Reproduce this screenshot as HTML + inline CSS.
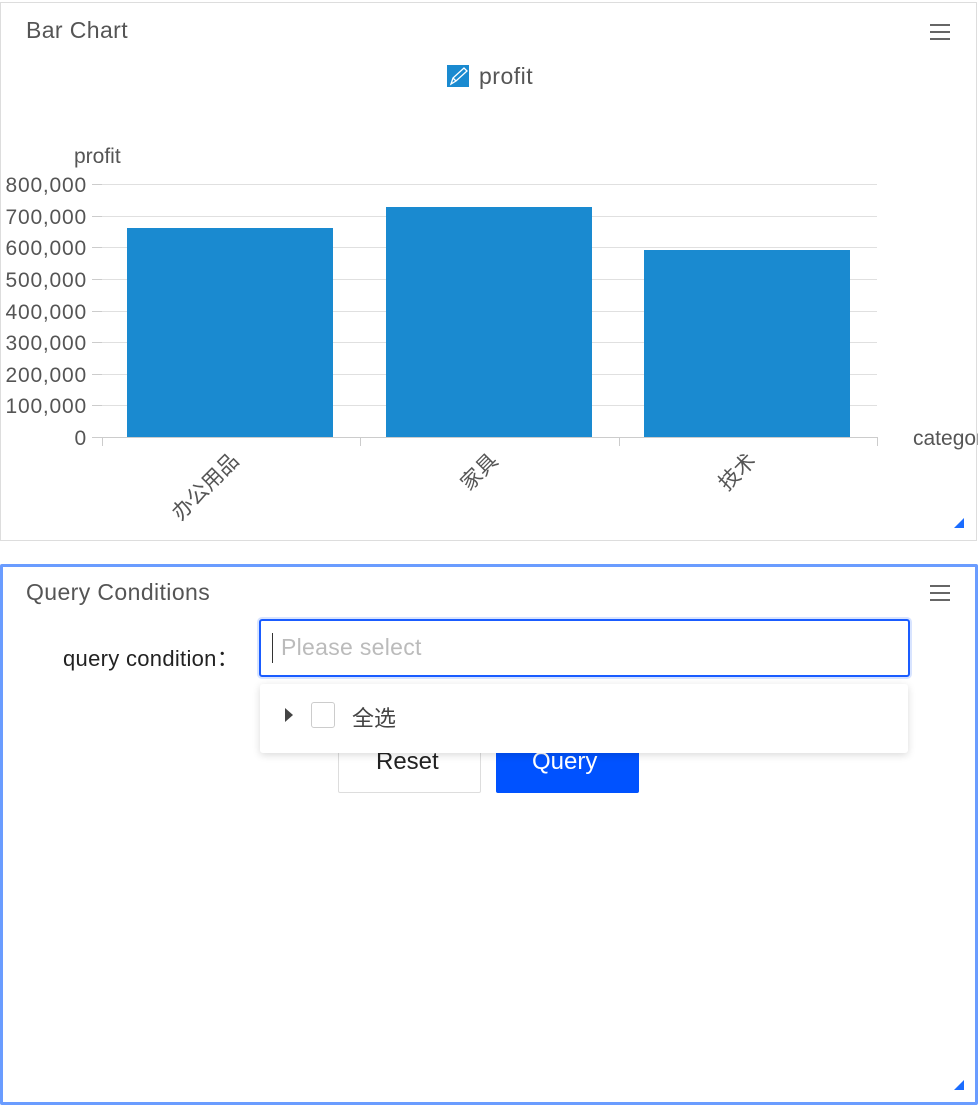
<!DOCTYPE html>
<html><head><meta charset="utf-8"><style>
body{margin:0;width:978px;height:1104px;background:#fff;font-family:"Liberation Sans","Noto Sans CJK SC",sans-serif;position:relative;overflow:hidden}
.p1{position:absolute;left:0;top:2px;width:975px;height:537px;border:1px solid #ddd}
.p2{position:absolute;left:0;top:564px;width:972px;height:535px;border:3px solid #6a9cff;border-radius:2px}
.t{position:absolute;font-size:23px;color:#555;letter-spacing:0.4px}
.menu{position:absolute;width:20px;height:16px;border-top:2px solid #666;border-bottom:2px solid #666;box-sizing:border-box}
.menu:after{content:"";position:absolute;left:0;right:0;top:5px;border-top:2px solid #666}
.corner{position:absolute;width:0;height:0;border-left:10px solid transparent;border-bottom:10px solid #1a6cff}
</style></head><body>
<div class="p1"></div>
<div class="t" style="left:26px;top:17px">Bar Chart</div>
<div class="menu" style="left:930px;top:24px"></div>
<div class="corner" style="left:954px;top:518px"></div>
<svg style="position:absolute;left:0;top:0" width="978" height="540" font-family="Liberation Sans, Noto Sans CJK SC, sans-serif">
<rect x="447" y="65" width="22" height="22" fill="#1a8ad0"/>
<path d="M451 84 L453 78 L464 68 L467 71 L456 81 Z M453 78 L456 81" stroke="#fff" stroke-width="1.3" fill="none"/>
<text x="479" y="84" font-size="23" fill="#555" letter-spacing="0.5">profit</text>
<text x="74" y="163" font-size="21" fill="#555">profit</text>
<g stroke="#e0e0e0" stroke-width="1">
<line x1="102" x2="877" y1="184.5" y2="184.5"/><line x1="102" x2="877" y1="216.5" y2="216.5"/><line x1="102" x2="877" y1="247.5" y2="247.5"/><line x1="102" x2="877" y1="279.5" y2="279.5"/><line x1="102" x2="877" y1="311.5" y2="311.5"/><line x1="102" x2="877" y1="342.5" y2="342.5"/><line x1="102" x2="877" y1="374.5" y2="374.5"/><line x1="102" x2="877" y1="405.5" y2="405.5"/>
</g>
<g stroke="#ccc"><line x1="102" x2="877" y1="437.5" y2="437.5"/>
<line x1="92" x2="102" y1="184.5" y2="184.5"/><line x1="92" x2="102" y1="216.5" y2="216.5"/><line x1="92" x2="102" y1="247.5" y2="247.5"/><line x1="92" x2="102" y1="279.5" y2="279.5"/><line x1="92" x2="102" y1="311.5" y2="311.5"/><line x1="92" x2="102" y1="342.5" y2="342.5"/><line x1="92" x2="102" y1="374.5" y2="374.5"/><line x1="92" x2="102" y1="405.5" y2="405.5"/><line x1="92" x2="102" y1="437.5" y2="437.5"/>
<line x1="102.5" x2="102.5" y1="437" y2="446"/><line x1="360.5" x2="360.5" y1="437" y2="446"/><line x1="619.5" x2="619.5" y1="437" y2="446"/><line x1="877.5" x2="877.5" y1="437" y2="446"/></g>
<g font-size="21" fill="#555" text-anchor="end" letter-spacing="0.8">
<text x="87" y="192">800,000</text><text x="87" y="224">700,000</text><text x="87" y="255">600,000</text><text x="87" y="287">500,000</text><text x="87" y="319">400,000</text><text x="87" y="350">300,000</text><text x="87" y="382">200,000</text><text x="87" y="413">100,000</text><text x="87" y="445">0</text>
</g>
<g fill="#1a8ad0"><rect x="127" y="228" width="206" height="209"/><rect x="386" y="207" width="206" height="230"/><rect x="644" y="250" width="206" height="187"/></g>
<text x="913" y="445" font-size="21" fill="#555">category</text>
<g font-size="21" fill="#555" text-anchor="end">
<text transform="translate(240,462) rotate(-45)">办公用品</text>
<text transform="translate(499,462) rotate(-45)">家具</text>
<text transform="translate(757,462) rotate(-45)">技术</text>
</g>
</svg>
<div class="p2"></div>
<div class="t" style="left:26px;top:579px">Query Conditions</div>
<div class="menu" style="left:930px;top:585px"></div>
<div class="corner" style="left:954px;top:1080px"></div>
<div style="position:absolute;left:63px;top:641px;font-size:22px;color:#222;letter-spacing:0.3px">query condition：</div>
<div style="position:absolute;left:259px;top:619px;width:647px;height:54px;border:2px solid #1a5cff;border-radius:3px;box-shadow:0 0 0 2px #d8e4ff"></div>
<div style="position:absolute;left:272px;top:633px;width:1px;height:30px;background:#333"></div>
<div style="position:absolute;left:281px;top:634px;font-size:23px;color:#bbb;letter-spacing:0.3px">Please select</div>
<div style="position:absolute;left:338px;top:732px;box-sizing:border-box;width:143px;height:61px;border:1px solid #ddd;border-radius:2px"></div>
<div style="position:absolute;left:376px;top:748px;font-size:24px;color:#222">Reset</div>
<div style="position:absolute;left:496px;top:732px;width:143px;height:61px;background:#0052ff;border-radius:2px"></div>
<div style="position:absolute;left:532px;top:748px;font-size:24px;color:#fff">Query</div>
<div style="position:absolute;left:260px;top:684px;width:648px;height:69px;background:#fff;border-radius:3px;box-shadow:0 2px 8px rgba(0,0,0,0.15)"></div>
<div style="position:absolute;left:285px;top:708px;width:0;height:0;border-top:7px solid transparent;border-bottom:7px solid transparent;border-left:8px solid #444"></div>
<div style="position:absolute;left:311px;top:702px;width:22px;height:24px;border:1px solid #ccc;border-radius:3px"></div>
<div style="position:absolute;left:352px;top:701px;font-size:22px;color:#444">全选</div>
</body></html>
